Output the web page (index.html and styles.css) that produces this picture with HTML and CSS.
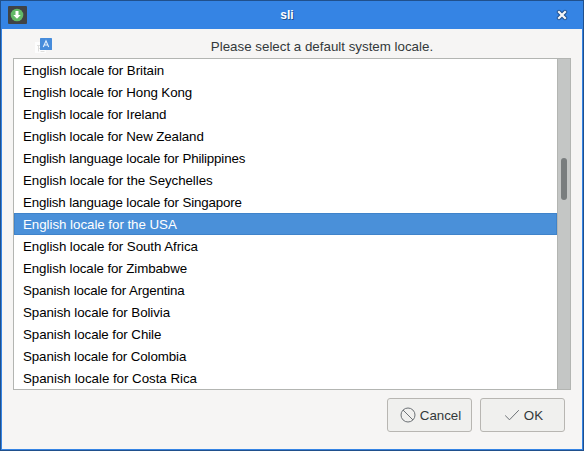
FILE: index.html
```html
<!DOCTYPE html>
<html lang="en">
<head>
<meta charset="utf-8">
<title>sli</title>
<link rel="stylesheet" href="styles.css">
</head>
<body>
<div class="window">
  <header class="titlebar">
    <svg class="app-icon" width="19" height="18" viewBox="0 0 19 18">
      <rect width="19" height="18" rx="1" fill="#404345"/>
      <circle cx="9" cy="9" r="6.3" fill="#62b967"/>
      <path d="M7.500 5h3v4h2.200L9 12.800 5.300 9h2.200z" fill="#fff"/>
    </svg>
    <h1 class="title">sli</h1>
    <svg class="close" width="12" height="12" viewBox="0 0 12 12">
      <path d="M3 3l6 6M9 3l-6 6" stroke="#205291" stroke-width="4.400" stroke-linecap="round"/>
      <path d="M3 3l6 6M9 3l-6 6" stroke="#f4f6f8" stroke-width="2.200" stroke-linecap="square"/>
    </svg>
  </header>
  <div class="prompt">
    <svg class="locale-icon" width="18" height="16" viewBox="0 0 18 16">
      <rect x="0" y="4" width="11" height="11" fill="#fdfdfd"/>
      <path d="M2 7.500h3M3.500 7v6.500M3 10.500h2M5.500 13.500h4" stroke="#dededc" fill="none"/>
      <rect x="5" y="0" width="12" height="12" rx=".6" fill="#478cdb"/>
      <path d="M8.300 9L11 2.800 13.700 9M9.300 7h3.400" stroke="#e3effc" stroke-width="1.100" fill="none"/>
    </svg>
    <p class="message">Please select a default system locale.</p>
  </div>
  <div class="list">
    <ul class="rows">
      <li>English locale for Britain</li>
      <li class="tight">English locale for Hong Kong</li>
      <li class="tight">English locale for Ireland</li>
      <li class="tight">English locale for New Zealand</li>
      <li class="tighter">English language locale for Philippines</li>
      <li>English locale for the Seychelles</li>
      <li class="tighter">English language locale for Singapore</li>
      <li class="selected">English locale for the USA</li>
      <li>English locale for South Africa</li>
      <li class="tight">English locale for Zimbabwe</li>
      <li class="tighter">Spanish locale for Argentina</li>
      <li>Spanish locale for Bolivia</li>
      <li>Spanish locale for Chile</li>
      <li class="tight">Spanish locale for Colombia</li>
      <li class="loose">Spanish locale for Costa Rica</li>
    </ul>
    <div class="scrollbar"><div class="thumb"></div></div>
  </div>
  <footer class="actions">
    <button class="button">
      <svg width="16" height="16" viewBox="0 0 16 16" fill="none" stroke="#6c7175">
        <circle cx="8" cy="8" r="7"/><path d="M3 3l10 10"/>
      </svg>
      <span>Cancel</span>
    </button>
    <button class="button">
      <svg width="16" height="16" viewBox="0 0 16 16" fill="none" stroke="#6c7175">
        <path d="M1.200 8.500l4.300 4.300L14.800 3.200"/>
      </svg>
      <span>OK</span>
    </button>
  </footer>
</div>
</body>
</html>
```
FILE: styles.css
```css
* { box-sizing: border-box; margin: 0; padding: 0; }
body {
  font: 13.333px/22px "Liberation Sans", Arial, sans-serif;
  color: #33393b;
  overflow: hidden;
}
svg { display: block; flex: none; }
.window {
  width: 584px;
  height: 451px;
  display: flex;
  flex-direction: column;
  border: 1px solid #20508c;
  background: #f6f5f4;
  box-shadow: inset 0 0 0 1px #3584e4;
}
.titlebar {
  height: 28px;
  flex: none;
  display: flex;
  align-items: center;
  padding: 0 15px 0 7px;
  background: #3584e4;
}
.title {
  flex: 1;
  padding-right: 9px;
  text-align: center;
  font-size: 12px;
  color: #fff;
  text-shadow: 1px 1px 0 #205291;
}
.prompt {
  height: 29px;
  flex: none;
  display: flex;
  padding: 0 12px 0 34px;
}
.locale-icon { margin-top: 9px; }
.message { flex: 1; text-align: center; padding: 7px 0 0 20px; }
.list {
  height: 332px;
  flex: none;
  margin: 0 12px;
  display: flex;
  border: 1px solid #b3b5b2;
  background: #fff;
  color: #000;
}
.rows { flex: 1; list-style: none; }
.rows li {
  height: 22px;
  padding: 1px 9px 0;
  white-space: nowrap;
  letter-spacing: -0.07px;
}
.rows .loose { letter-spacing: -0.03px; }
.rows .tight { letter-spacing: -0.1px; }
.rows .tighter { letter-spacing: -0.155px; }
.rows .selected {
  background: #4a90d9;
  color: #fff;
  letter-spacing: -0.04px;
  box-shadow: inset 0 0 0 1px #3f83ca;
}
.scrollbar {
  width: 13px;
  padding: 99px 3px 0;
  border-left: 1px solid #b3b5b2;
  background: #c4c6c5;
}
.thumb { width: 6px; height: 42px; border-radius: 3px; background: #797d7e; }
.actions {
  display: flex;
  justify-content: flex-end;
  gap: 8px;
  padding: 8px 18px 0 0;
}
.button {
  width: 85px;
  height: 34px;
  display: flex;
  align-items: center;
  justify-content: center;
  gap: 4px;
  padding-left: 2px;
  border: 1px solid #b8b6b2;
  border-radius: 3px;
  background: #f0f0ee;
  color: #33393b;
  font: inherit;
}
.button span { padding-top: 1px; }
```
